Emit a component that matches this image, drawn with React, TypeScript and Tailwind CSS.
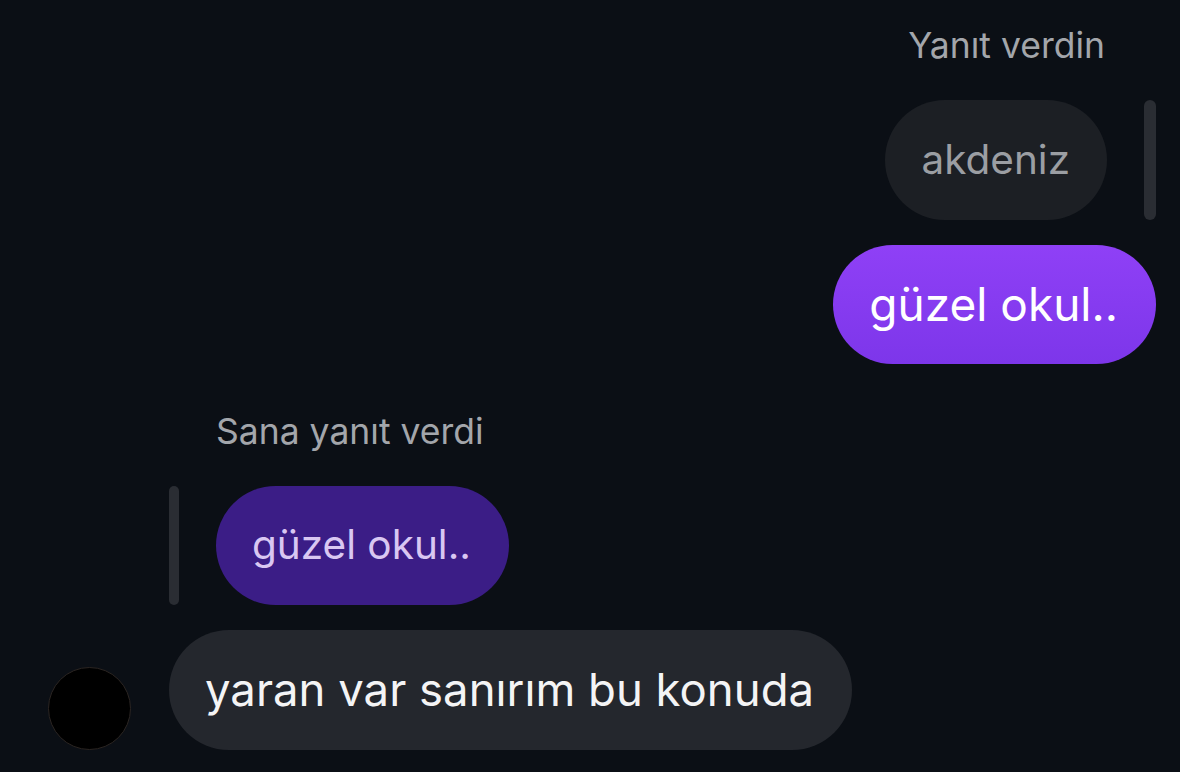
export default function App() {
  return (
    <div
      className="flex h-[772px] w-full flex-col overflow-hidden bg-[#0b0f15]"
      style={{ fontFamily: "Inter, Roboto, 'Noto Sans', sans-serif" }}
    >
      {/* OUTGOING REPLY */}
      <div className="flex flex-col items-end pr-[24px]">
        <div className="mt-[26px] pr-[51px] text-[35.5px] leading-[40px] text-[#a3a6ab]">Yanıt verdin</div>

        <div className="mt-[34px] flex items-stretch gap-[37px]">
          <div className="flex h-[120px] items-center rounded-full bg-[#1c1f24] pl-[36px] pr-[37px] text-[40.5px] text-[#9b9ea3]">
            akdeniz
          </div>
          <div className="w-[12px] rounded-full bg-[#2a2d33]" />
        </div>

        <div className="mt-[25px] flex h-[119px] items-center rounded-full bg-gradient-to-b from-[#8f40f6] to-[#7d36ea] pl-[36px] pr-[38px] text-[46px] text-white">
          güzel okul..
        </div>
      </div>

      {/* INCOMING REPLY */}
      <div className="mt-[48px] pl-[216px] text-[35.5px] leading-[40px] text-[#a3a6ab]">Sana yanıt verdi</div>

      <div className="mt-[34px] flex items-stretch gap-[37px] pl-[169px]">
        <div className="w-[10px] rounded-full bg-[#2a2d33]" />
        <div className="flex h-[119px] items-center rounded-full bg-[#3b1d86] pl-[36px] pr-[38px] text-[40.5px] text-[#d9c7f2]">
          güzel okul..
        </div>
      </div>

      <div className="mt-[25px] flex items-end gap-[38px] pl-[48px]">
        <div className="h-[83px] w-[83px] rounded-full border border-[#2b2522] bg-black" />
        <div className="flex h-[120px] items-center rounded-full bg-[#24272d] pl-[36px] pr-[38px] text-[45.5px] text-[#f4f4f5]">
          yaran var sanırım bu konuda
        </div>
      </div>
    </div>
  );
}
